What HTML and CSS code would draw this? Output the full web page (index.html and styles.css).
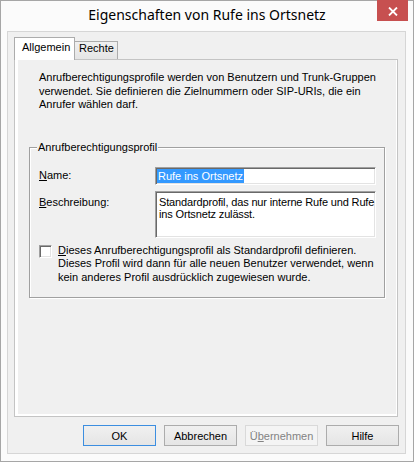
FILE: index.html
```html
<!DOCTYPE html>
<html lang="de">
<head>
  <meta charset="UTF-8">
  <title>Eigenschaften von Rufe ins Ortsnetz</title>
  <link rel="stylesheet" href="styles.css">
</head>
<body>

  <div class="window">
    <!-- Title bar -->
    <div class="titlebar">
      <span></span>
      <h1 class="title">Eigenschaften von Rufe ins Ortsnetz</h1>
      <button class="close" type="button" aria-label="Schließen">
        <svg width="10" height="9" viewBox="0 0 10 9">
          <path d="M1 0.5 L9 8.5 M9 0.5 L1 8.5" stroke="#fff" stroke-width="1.8" fill="none"/>
        </svg>
      </button>
    </div>

    <div class="client">
      <!-- Tabs -->
      <div class="tabs">
        <div class="tab active">Allgemein</div>
        <div class="tab">Rechte</div>
      </div>

      <div class="panel">
        <div class="page">
          <p class="intro">
            Anrufberechtigungsprofile werden von Benutzern und Trunk-Gruppen
            verwendet. Sie definieren die Zielnummern oder SIP-URIs, die ein
            Anrufer wählen darf.
          </p>

          <fieldset class="group">
            <legend>Anrufberechtigungsprofil</legend>

            <div class="row">
              <label class="lbl name-lbl"><u>N</u>ame:</label>
              <div class="field single"><span class="sel">Rufe ins Ortsnetz</span></div>
            </div>

            <div class="row desc">
              <label class="lbl desc-lbl"><u>B</u>eschreibung:</label>
              <div class="field multi">Standardprofil, das nur interne Rufe und Rufe ins Ortsnetz zulässt.</div>
            </div>

            <div class="check">
              <span class="box"></span>
              <span class="check-text"><u>D</u>ieses Anrufberechtigungsprofil als Standardprofil definieren.
                Dieses Profil wird dann für alle neuen Benutzer verwendet, wenn
                kein anderes Profil ausdrücklich zugewiesen wurde.</span>
            </div>
          </fieldset>
        </div>
      </div>

      <!-- Dialog buttons -->
      <div class="buttons">
        <button class="btn default" type="button">OK</button>
        <button class="btn" type="button">Abbrechen</button>
        <button class="btn" type="button" disabled>Ü<u>b</u>ernehmen</button>
        <button class="btn" type="button">Hilfe</button>
      </div>
    </div>
  </div>

</body>
</html>
```

FILE: styles.css
```css
:root {
  --frame: #fbfbfb;
  --face: #f0f0f0;
  --tab-border: #acacac;
  --panel-border: #c4c4c4;
  --etch-dark: #a0a0a0;
  --select: #3399ff;
  --ui-font: "Liberation Sans", Arial, sans-serif;
  --title-font: "Noto Sans", "Open Sans", sans-serif;
}
*, *::before, *::after {
  box-sizing: border-box;
}
body {
  margin: 0;
  font-family: var(--ui-font);
  font-size: 11px;
  line-height: 13px;
  color: #000;
  background: #fff;
}
u {
  text-decoration-thickness: 1px;
  text-underline-offset: 1px;
}

/* window frame */
.window {
  width: 414px;
  height: 462px;
  border: 1px solid #a6a6a6;
  background: var(--frame);
  display: flex;
  flex-direction: column;
}
.titlebar {
  height: 30px;
  flex: none;
  display: grid;
  grid-template-columns: 1fr auto 1fr;
  align-items: start;
}
.title {
  margin: 0;
  font-family: var(--title-font);
  font-size: 14px;
  font-weight: normal;
  line-height: 28px;
  color: #000;
  white-space: nowrap;
}
.close {
  justify-self: end;
  width: 31px;
  height: 21px;
  margin: -1px 5px 0 0;
  padding: 2px 0 0;
  border: none;
  background: #c75050;
  display: flex;
  align-items: center;
  justify-content: center;
}

/* client area */
.client {
  flex: 1;
  margin: 0 7px 7px 6px;
  padding: 5px 6px 7px 6px;
  border: 1px solid #d6d6d6;
  background: var(--face);
  display: flex;
  flex-direction: column;
}

/* tab strip */
.tabs {
  height: 23px;
  display: flex;
  align-items: flex-end;
  margin-bottom: -1px;
  position: relative;
  z-index: 1;
}
.tab {
  height: 18px;
  width: 44px;
  margin: 0 0 1px -1px;
  padding: 0 0 0 4px;
  border: 1px solid var(--tab-border);
  border-bottom: none;
  background: linear-gradient(#f0f0f0, #e5e5e5);
}
.tab.active {
  height: 23px;
  width: 61px;
  margin: 0;
  padding: 3px 0 0 7px;
  background: #fff;
  position: relative;
  z-index: 1;
}

.panel {
  height: 358px;
  flex: none;
  margin-right: 1px;
  padding: 0 1px 2px 3px;
  border: 1px solid var(--panel-border);
  background: #fff;
  display: flex;
}
.page {
  flex: 1;
  padding: 11px 11px 0 11px;
  background: var(--face);
}
.intro {
  margin: 0 0 0 10px;
  line-height: 13.5px;
}

/* group box */
.group {
  margin: 29px 0 0 0;
  padding: 13px 8px 13px 9px;
  border: 1px solid var(--etch-dark);
  box-shadow: inset 1px 1px 0 #fff, 1px 1px 0 #fff;
  min-width: 0;
}
.group legend {
  margin-left: -2px;
  padding: 0 1px;
  line-height: 13px;
  background: var(--face);
}
.row {
  display: grid;
  grid-template-columns: 116px 221px;
}
.row.desc {
  margin-top: 6px;
}
.name-lbl {
  padding-top: 2px;
}
.desc-lbl {
  padding-top: 5px;
}
.field {
  background: #fff;
  border: 1px solid;
  border-color: var(--etch-dark) #fff #fff var(--etch-dark);
  box-shadow: inset 1px 1px 0 #696969, inset -1px -1px 0 #e3e3e3;
}
.field.single {
  height: 18px;
  padding: 1px 2px 0 1px;
  line-height: 14px;
}
.sel {
  display: inline-block;
  padding: 0 1px;
  background: var(--select);
  color: #fff;
}
.field.multi {
  height: 47px;
  padding: 4px 0 0 3px;
  line-height: 12.5px;
  letter-spacing: -0.15px;
}

/* checkbox row */
.check {
  display: flex;
  gap: 6px;
  margin-top: 6px;
  line-height: 13.5px;
}
.box {
  flex: none;
  width: 13px;
  height: 13px;
  margin-top: 1px;
  background: #fff;
  border: 1px solid;
  border-color: var(--etch-dark) #fff #fff var(--etch-dark);
  box-shadow: inset 1px 1px 0 #696969, inset -1px -1px 0 #e3e3e3;
}

/* buttons */
.buttons {
  display: flex;
  justify-content: flex-end;
  gap: 8px;
  margin-top: 8px;
}
.btn {
  width: 73px;
  height: 21px;
  padding: 0;
  font-family: var(--ui-font);
  font-size: 11px;
  color: #000;
  border: 1px solid var(--tab-border);
  background: linear-gradient(#f0f0f0, #e5e5e5);
}
.btn.default {
  border-color: #3c8ee0;
}
.btn:disabled {
  color: #838383;
  border-color: #d9d9d9;
  background: #f4f4f4;
}
```
